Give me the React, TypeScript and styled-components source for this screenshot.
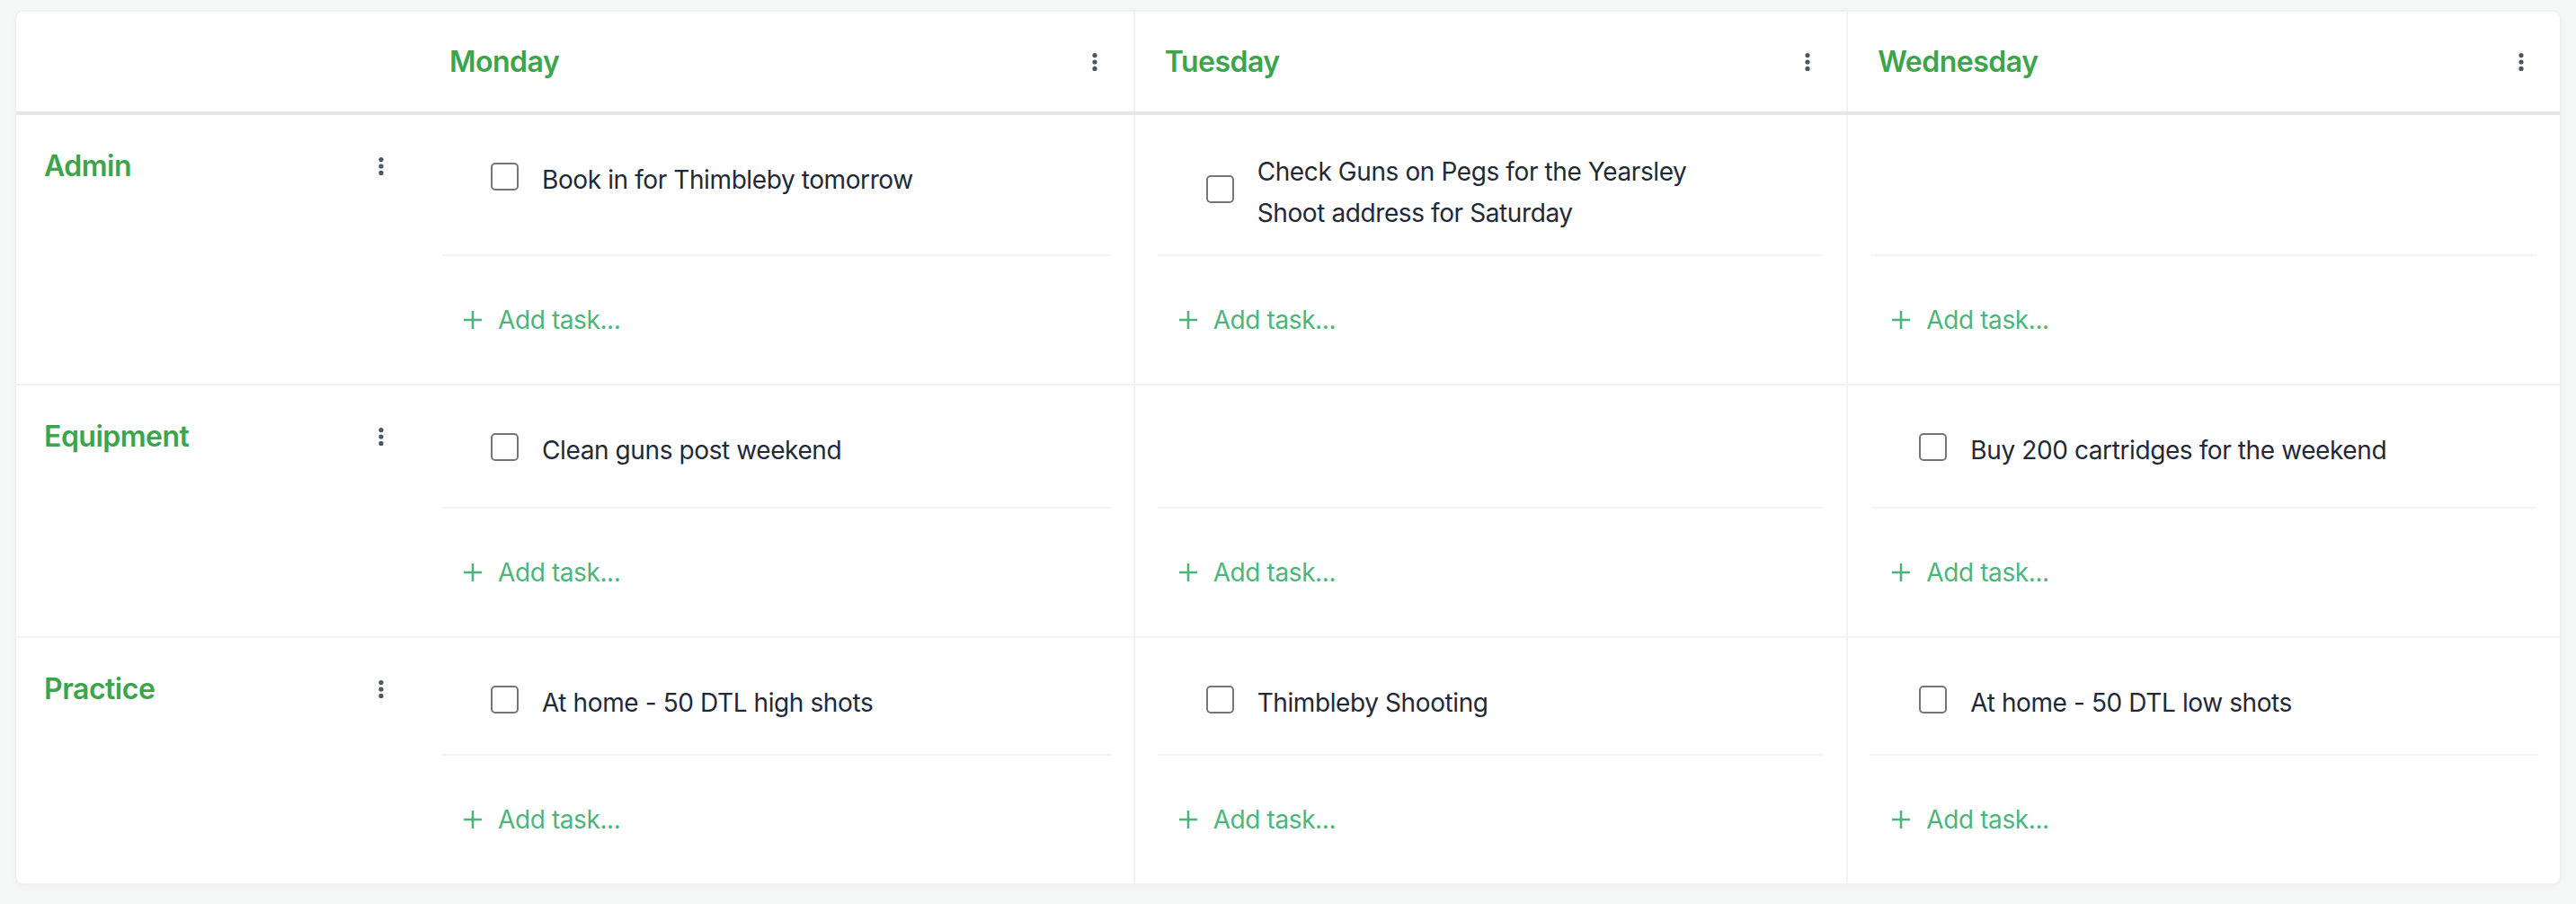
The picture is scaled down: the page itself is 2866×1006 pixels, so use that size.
import React from 'react';
import styled, { createGlobalStyle } from 'styled-components';

const GlobalStyle = createGlobalStyle`
  html, body { margin: 0; padding: 0; background: #f6f8f7; }
  body {
    font-family: Inter, "Open Sans", "Liberation Sans", sans-serif;
    -webkit-font-smoothing: antialiased;
  }
  * { box-sizing: border-box; }
`;

const Page = styled.div`
  padding: 11px 16px 20px;
`;

const Board = styled.div`
  background: #ffffff;
  border: 2px solid #eef0f1;
  border-radius: 10px;
  box-shadow: 0 2px 8px rgba(20, 40, 30, 0.03);
  overflow: hidden;
`;

const GridRow = styled.div<{ $header?: boolean }>`
  display: grid;
  grid-template-columns: 449px repeat(3, minmax(0, 1fr));
  height: ${(p) => (p.$header ? '115px' : 'auto')};
  border-bottom: ${(p) => (p.$header ? '4px solid #e5e7eb' : '2px solid #f1f2f4')};
  &:last-child {
    border-bottom: none;
  }
`;

const HeaderCell = styled.div<{ $divided?: boolean }>`
  display: flex;
  align-items: center;
  justify-content: space-between;
  padding: 0 33px 0 33px;
  border-left: ${(p) => (p.$divided ? '2px solid #f1f2f4' : 'none')};
`;

const DayTitle = styled.span`
  font-size: 32px;
  font-weight: 600;
  color: #3ca44b;
  letter-spacing: -0.5px;
`;

const LabelCell = styled.div`
  display: flex;
  align-items: center;
  justify-content: space-between;
  align-self: start;
  padding: 33px 33px 0 31px;
`;

const CategoryTitle = styled.span`
  font-size: 32px;
  line-height: 48px;
  font-weight: 600;
  color: #3ca44b;
  letter-spacing: -0.5px;
`;

const KebabButton = styled.span`
  display: inline-flex;
  width: 20px;
  height: 20px;
  align-items: center;
  justify-content: center;
  color: #4b5563;
`;

const DayCell = styled.div<{ $divided?: boolean }>`
  display: flex;
  flex-direction: column;
  border-left: ${(p) => (p.$divided ? '2px solid #f1f2f4' : 'none')};
`;

const TaskArea = styled.div<{ $height: number }>`
  height: ${(p) => p.$height}px;
  margin: 0 25px;
  padding: 40px 0 0 54px;
  border-bottom: 2px solid #f3f4f6;
`;

const TaskItem = styled.label`
  display: flex;
  align-items: center;
  gap: 26px;
  min-height: 64px;
`;

const CheckBox = styled.span`
  flex: 0 0 auto;
  width: 31px;
  height: 31px;
  margin-bottom: 8px;
  border: 2px solid #767676;
  border-radius: 5px;
  background: #ffffff;
`;

const TaskText = styled.span`
  max-width: 500px;
  font-size: 28px;
  line-height: 46px;
  color: #1f2937;
  letter-spacing: -0.4px;
`;

const AddArea = styled.div`
  height: 142px;
  margin: 0 25px;
  padding-left: 24px;
  display: flex;
  align-items: center;
  gap: 18px;
  font-size: 28px;
  letter-spacing: -0.4px;
  color: #4db57c;
`;

const Kebab = () => (
  <KebabButton>
    <svg width="6" height="20" viewBox="0 0 6 20" fill="currentColor">
      <circle cx="3" cy="2.6" r="2.6" />
      <circle cx="3" cy="10" r="2.6" />
      <circle cx="3" cy="17.4" r="2.6" />
    </svg>
  </KebabButton>
);

const PlusIcon = () => (
  <svg width="20" height="20" viewBox="0 0 20 20" stroke="currentColor" strokeWidth="2.6" fill="none">
    <line x1="10" y1="0" x2="10" y2="20" />
    <line x1="0" y1="10" x2="20" y2="10" />
  </svg>
);

const days = ['Monday', 'Tuesday', 'Wednesday'];

type Category = { name: string; taskHeight: number; tasks: string[][] };

const categories: Category[] = [
  {
    name: 'Admin',
    taskHeight: 157,
    tasks: [
      ['Book in for Thimbleby tomorrow'],
      ['Check Guns on Pegs for the Yearsley Shoot address for Saturday'],
      [],
    ],
  },
  {
    name: 'Equipment',
    taskHeight: 137,
    tasks: [['Clean guns post weekend'], [], ['Buy 200 cartridges for the weekend']],
  },
  {
    name: 'Practice',
    taskHeight: 131,
    tasks: [['At home - 50 DTL high shots'], ['Thimbleby Shooting'], ['At home - 50 DTL low shots']],
  },
];

export default function App() {
  return (
    <>
      <GlobalStyle />
      <Page>
        <Board>
          <GridRow $header>
            <HeaderCell />
            {days.map((d, i) => (
              <HeaderCell key={d} $divided={i > 0}>
                <DayTitle>{d}</DayTitle>
                <Kebab />
              </HeaderCell>
            ))}
          </GridRow>
          {categories.map((c) => (
            <GridRow key={c.name}>
              <LabelCell>
                <CategoryTitle>{c.name}</CategoryTitle>
                <Kebab />
              </LabelCell>
              {c.tasks.map((list, i) => (
                <DayCell key={i} $divided={i > 0}>
                  <TaskArea $height={c.taskHeight}>
                    {list.map((t) => (
                      <TaskItem key={t}>
                        <CheckBox />
                        <TaskText>{t}</TaskText>
                      </TaskItem>
                    ))}
                  </TaskArea>
                  <AddArea>
                    <PlusIcon />
                    <span>Add task...</span>
                  </AddArea>
                </DayCell>
              ))}
            </GridRow>
          ))}
        </Board>
      </Page>
    </>
  );
}
